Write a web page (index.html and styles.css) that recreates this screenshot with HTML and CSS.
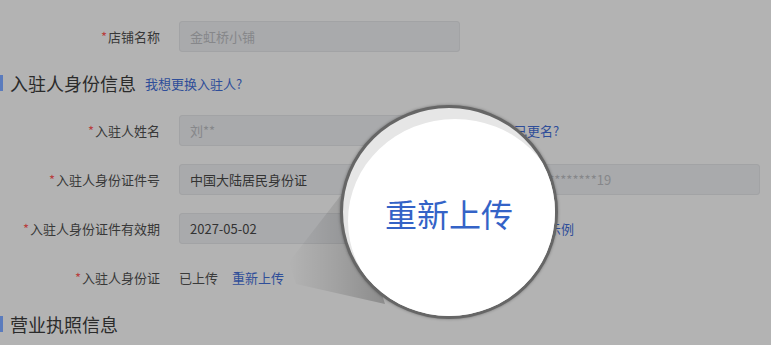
FILE: index.html
```html
<!DOCTYPE html>
<html lang="zh">
<head>
<meta charset="utf-8">
<link rel="stylesheet" href="styles.css">
</head>
<body>
<div class="page">
  <div class="form">
    <div class="row">
      <div class="lbl"><span class="req">*</span>店铺名称</div>
      <div class="input dis w-std">金虹桥小铺</div>
    </div>
    <div class="section">
      <span class="title">入驻人身份信息</span>
      <span class="link">我想更换入驻人?</span>
    </div>
    <div class="row">
      <div class="lbl"><span class="req">*</span>入驻人姓名</div>
      <div class="input dis w-wide">刘**</div>
      <span class="link side-a">我已更名?</span>
    </div>
    <div class="row">
      <div class="lbl"><span class="req">*</span>入驻人身份证件号</div>
      <div class="input w-sel">中国大陆居民身份证</div>
      <div class="input dis w-id">3*********************19</div>
    </div>
    <div class="row">
      <div class="lbl"><span class="req">*</span>入驻人身份证件有效期</div>
      <div class="input w-wide">2027-05-02</div>
      <span class="link side-b">查看示例</span>
    </div>
    <div class="row">
      <div class="lbl"><span class="req">*</span>入驻人身份证</div>
      <span class="plain">已上传</span>
      <span class="link reup">重新上传</span>
    </div>
    <div class="section">
      <span class="title">营业执照信息</span>
    </div>
  </div>

  <svg class="cone" width="771" height="345" viewBox="0 0 771 345">
    <defs>
      <linearGradient id="cg" x1="0" y1="0" x2="1" y2="0">
        <stop offset="0" stop-color="#000" stop-opacity="0"/>
        <stop offset="0.5" stop-color="#000" stop-opacity="0.1"/>
        <stop offset="1" stop-color="#000" stop-opacity="0.22"/>
      </linearGradient>
    </defs>
    <polygon points="289,262 348,186 385,304 296,284" fill="url(#cg)"/>
  </svg>

  <div class="magnifier">
    <div class="lens"></div>
    <span class="zoomtext">重新上传</span>
  </div>
</div>
</body>
</html>
```

FILE: styles.css
```css
html, body {
  margin: 0;
  padding: 0;
  background: #b3b3b3;
}

body {
  font-family: "Noto Sans CJK SC", "Noto Sans", sans-serif;
  color: #3a3a3a;
}

.page {
  position: relative;
  width: 771px;
  height: 345px;
  overflow: hidden;
}

.form {
  display: flex;
  flex-direction: column;
  padding-top: 21px;
}

.row {
  display: flex;
  align-items: center;
  height: 31px;
  margin-top: 18px;
  font-size: 13px;
}

.row:first-child {
  margin-top: 0;
}

.section + .row {
  margin-top: 20px;
}

.lbl {
  width: 160px;
  flex: none;
  text-align: right;
  margin-right: 19px;
  color: #383838;
  white-space: nowrap;
}

.req {
  color: #b8403f;
  margin-right: 1px;
}

.input {
  box-sizing: border-box;
  height: 31px;
  display: flex;
  align-items: center;
  padding: 0 10px;
  background: #a9aaac;
  border: 1px solid #a2a3a5;
  border-radius: 3px;
  color: #333;
  white-space: nowrap;
  overflow: hidden;
  flex: none;
}

.input.dis {
  color: #86878a;
}

.w-std { width: 281px; }
.w-wide { width: 302px; }
.w-sel { width: 262px; margin-right: 10px; }
.w-id { width: 309px; }

.link {
  color: #2f4e99;
  white-space: nowrap;
}

.side-a {
  margin-left: 20px;
}

.side-b {
  margin-left: 41px;
}

.plain {
  color: #3a3a3a;
}

.reup {
  margin-left: 14px;
}

.section {
  display: flex;
  align-items: center;
  height: 24px;
  margin-top: 19px;
}

.section::before {
  content: "";
  width: 3px;
  height: 16px;
  background: #5a7bbd;
  margin-right: 7px;
  flex: none;
}

.title {
  font-size: 18px;
  color: #2b2b2b;
}

.section .link {
  font-size: 13px;
  margin-left: 9px;
}

.cone {
  position: absolute;
  left: 0;
  top: 0;
}

.magnifier {
  position: absolute;
  left: 340px;
  top: 105px;
  width: 218px;
  height: 214px;
  box-sizing: border-box;
  border-radius: 50%;
  border: 3px solid #666666;
  background: #e6e6e6;
  overflow: hidden;
  box-shadow: 0 0 3px rgba(0, 0, 0, 0.35);
  display: flex;
  align-items: center;
  justify-content: center;
}

.lens {
  position: absolute;
  left: 5px;
  top: 11px;
  width: 214px;
  height: 204px;
  border-radius: 50%;
  background: #ffffff;
}

.zoomtext {
  position: relative;
  font-size: 32px;
  font-weight: 400;
  color: #3463c7;
  margin-top: 2px;
  white-space: nowrap;
}
```
